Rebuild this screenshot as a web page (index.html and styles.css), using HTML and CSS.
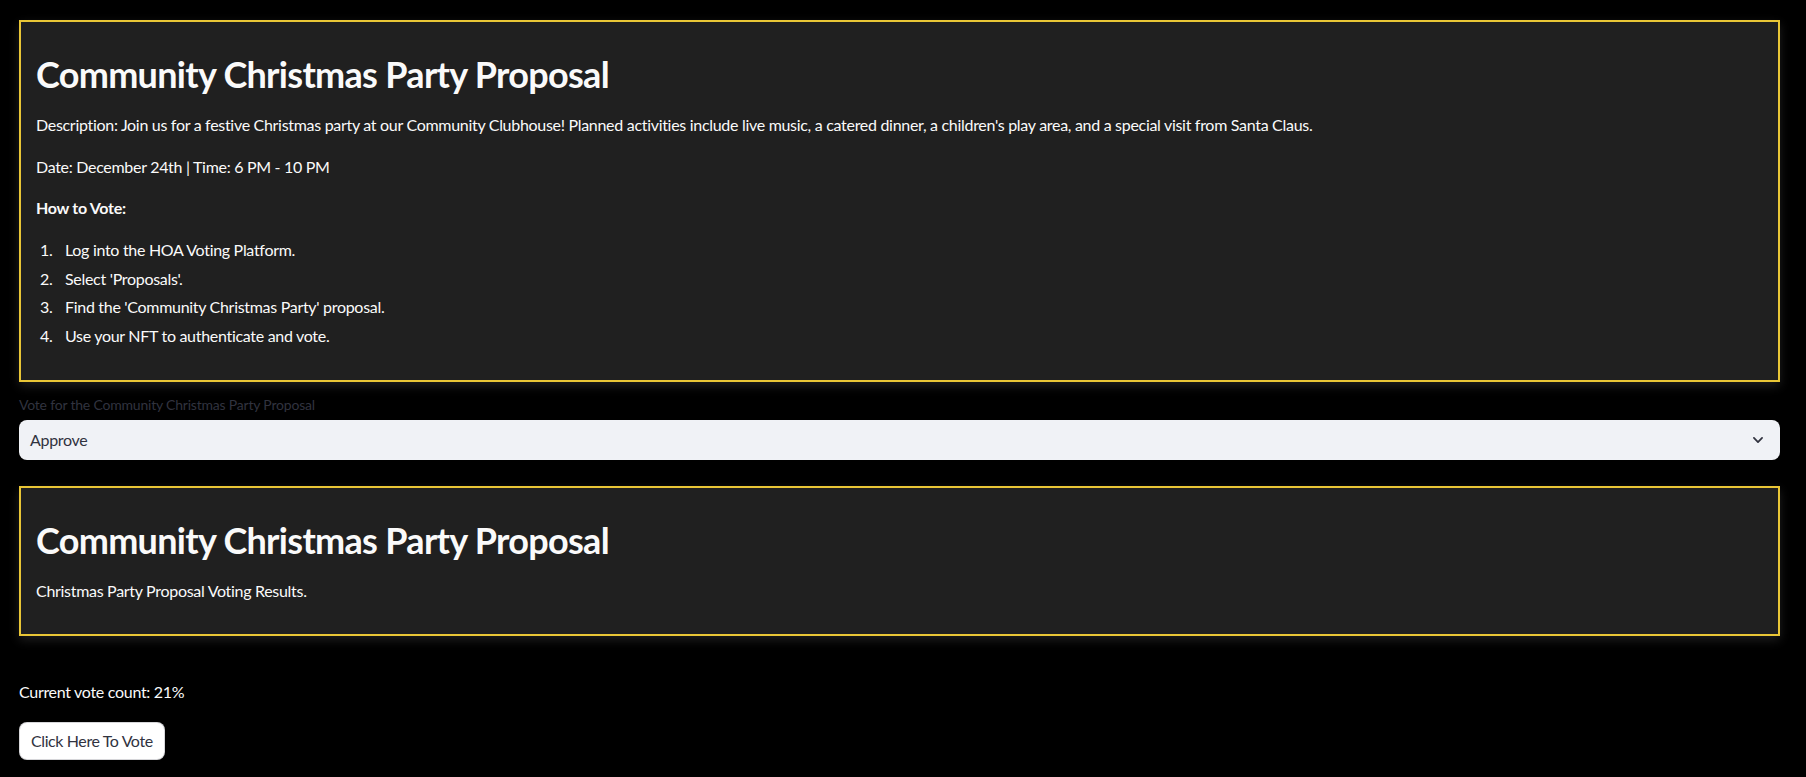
FILE: index.html
```html
<!DOCTYPE html>
<html lang="en">
<head>
<meta charset="utf-8">
<title>Community Christmas Party Proposal</title>
<link rel="stylesheet" href="styles.css">
</head>
<body>
<main class="main">
  <section class="card">
    <h2 class="card-title">Community Christmas Party Proposal</h2>
    <p class="text">Description: Join us for a festive Christmas party at our Community Clubhouse! Planned activities include live music, a catered dinner, a children's play area, and a special visit from Santa Claus.</p>
    <p class="text">Date: December 24th | Time: 6 PM - 10 PM</p>
    <p class="text"><strong>How to Vote:</strong></p>
    <ol class="steps">
      <li>Log into the HOA Voting Platform.</li>
      <li>Select 'Proposals'.</li>
      <li>Find the 'Community Christmas Party' proposal.</li>
      <li>Use your NFT to authenticate and vote.</li>
    </ol>
  </section>

  <div class="field">
    <label class="field-label">Vote for the Community Christmas Party Proposal</label>
    <div class="select">
      <span class="select-value">Approve</span>
      <svg class="chevron" width="14" height="14" viewBox="0 0 24 24" aria-hidden="true"><path d="M5 8.5l7 7 7-7" fill="none" stroke="#31333f" stroke-width="3" stroke-linecap="round" stroke-linejoin="round"/></svg>
    </div>
  </div>

  <section class="card card-results">
    <h2 class="card-title">Community Christmas Party Proposal</h2>
    <p class="text">Christmas Party Proposal Voting Results.</p>
  </section>

  <p class="count">Current vote count: 21%</p>
  <button class="vote-btn" type="button">Click Here To Vote</button>
</main>
</body>
</html>
```

FILE: styles.css
```css
html, body {
  margin: 0;
  padding: 0;
  background: #000;
}

body {
  font-family: "Lato", "Liberation Sans", sans-serif;
  color: #fafafa;
  font-size: 16px;
  letter-spacing: -0.3px;
}

.main {
  display: flex;
  flex-direction: column;
  align-items: stretch;
  padding: 20px 26px 20px 19px;
}

.card {
  background: #202020;
  border: 2px solid #e9c636;
  padding: 15px;
  box-shadow: 0 4px 10px rgba(255, 255, 255, 0.12);
}

.card-title {
  margin: 0;
  padding: 16px 0;
  font-size: 36px;
  line-height: 43px;
  font-weight: 700;
  color: #fafafa;
  letter-spacing: -0.7px;
}

.text {
  margin: 0 0 16px;
  line-height: 25.6px;
  font-size: 16px;
}

.text strong {
  font-weight: 700;
}

.steps {
  margin: 0 0 16px;
  padding: 0 0 0 4px;
  list-style: none;
  counter-reset: step;
}

.steps li {
  display: flex;
  margin: 3.2px 0;
  line-height: 25.6px;
  counter-increment: step;
}

.steps li::before {
  content: counter(step) ".";
  flex: 0 0 25px;
}

.field {
  display: flex;
  flex-direction: column;
  margin-top: 14px;
}

.field-label {
  font-size: 14px;
  line-height: 18px;
  color: #31333f;
  margin-bottom: 6px;
  letter-spacing: -0.2px;
}

.select {
  display: flex;
  align-items: center;
  justify-content: space-between;
  height: 40px;
  box-sizing: border-box;
  background: #f0f2f6;
  border-radius: 8px;
  padding: 0 15px 0 11px;
  color: #31333f;
  font-size: 16px;
}

.chevron {
  display: block;
}

.card-results {
  margin-top: 26px;
}

.count {
  margin: 43px 0 17px;
  line-height: 25.6px;
  font-size: 16px;
  color: #fafafa;
}

.vote-btn {
  align-self: flex-start;
  font-family: inherit;
  font-size: 16px;
  letter-spacing: -0.4px;
  color: #31333f;
  background: #fff;
  border: 1px solid rgba(49, 51, 63, 0.2);
  border-radius: 8px;
  height: 38px;
  padding: 0 11px;
  cursor: pointer;
}
```
